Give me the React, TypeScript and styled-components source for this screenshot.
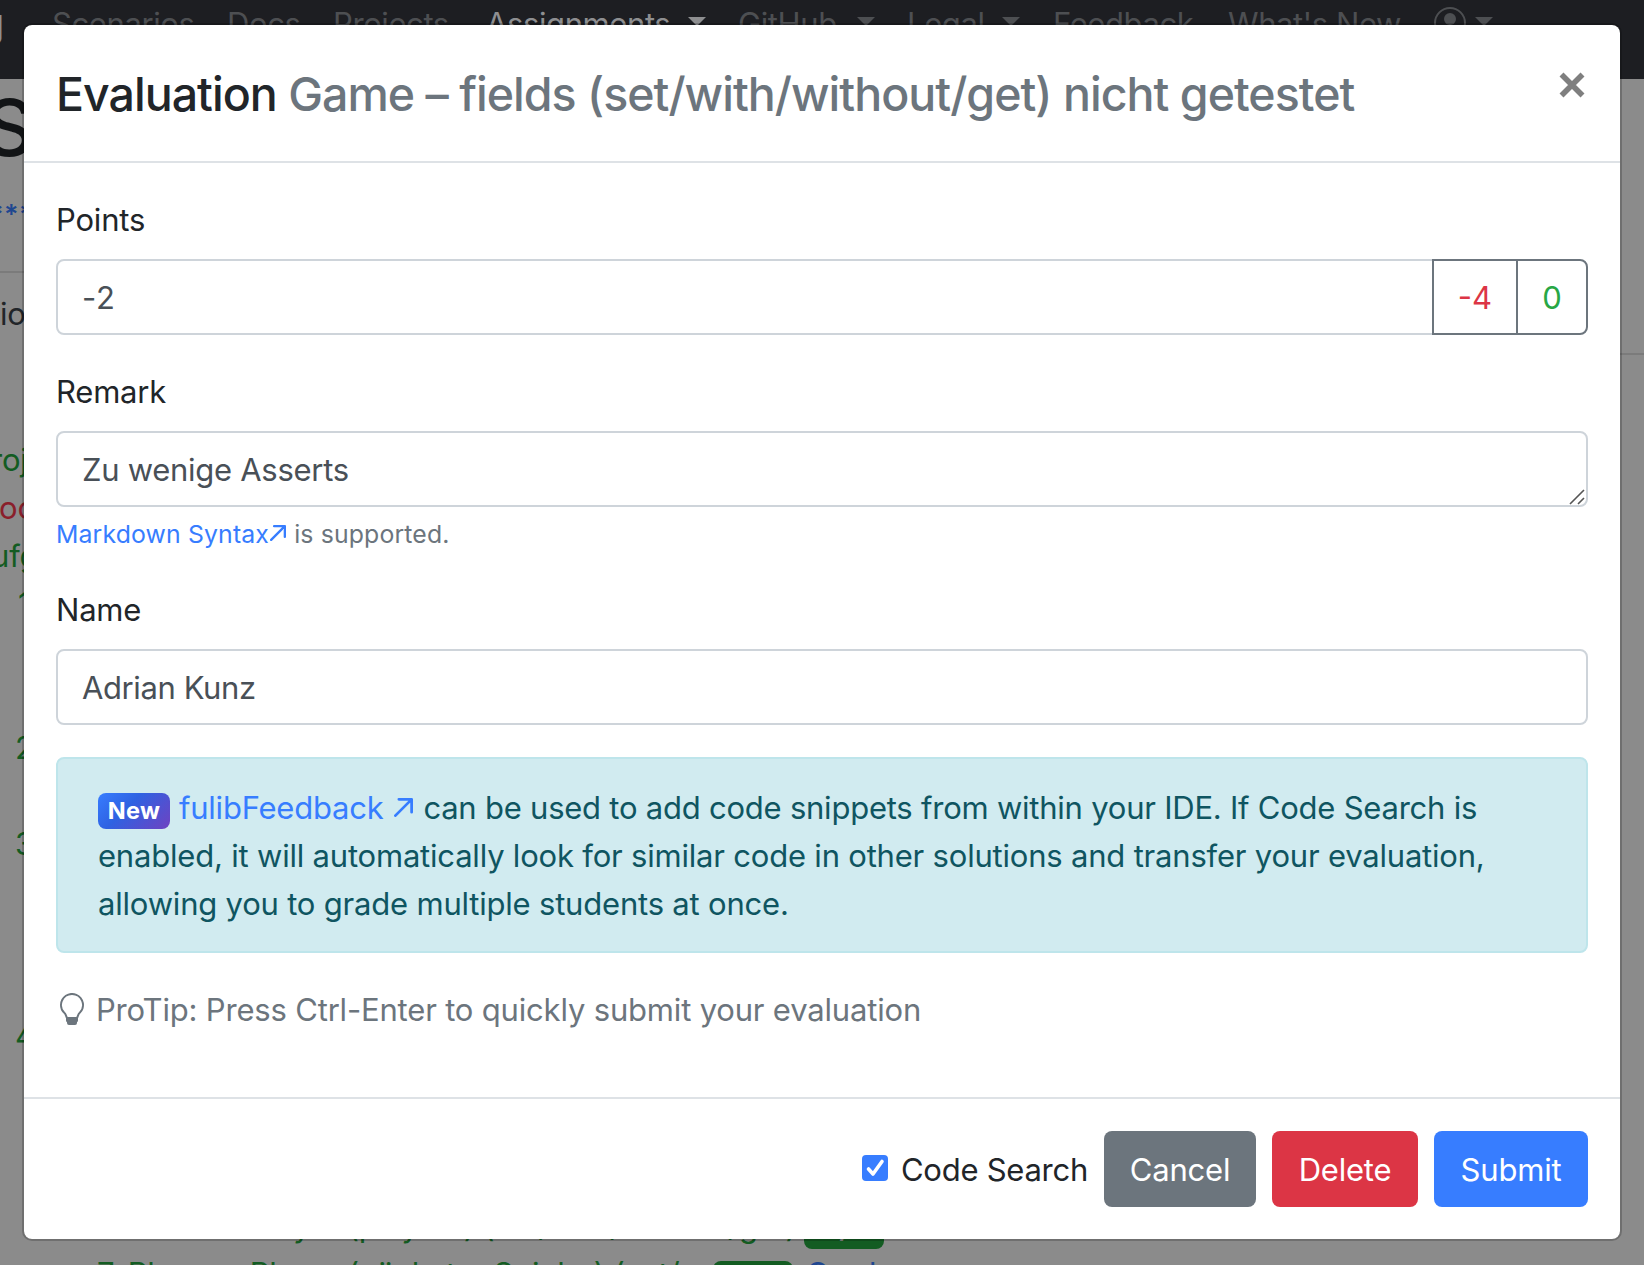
import React from 'react';
import styled, { createGlobalStyle } from 'styled-components';

const Global = createGlobalStyle`
  *, *::before, *::after { box-sizing: border-box; }
  html, body { margin: 0; padding: 0; overflow: hidden; }
  body {
    font-family: Inter, Roboto, "Liberation Sans", sans-serif;
    font-size: 31px;
    line-height: 50px;
    letter-spacing: -0.2px;
    color: #212529;
    background: #8b8b8b;
  }
`;

const dim = '#4d4f52';
const bright = '#8e8f91';
const green = '#135c22';

const Screen = styled.div`
  position: relative;
  width: 1644px;
  height: 1265px;
  overflow: hidden;
`;

/* Dimmed page behind the dialog */
const Page = styled.div`
  display: flex;
  flex-direction: column;
  white-space: nowrap;
  line-height: 48px;
`;
const Navbar = styled.nav`
  display: flex;
  flex: none;
  height: 79px;
  background: #1d1e22;
  letter-spacing: -0.4px;
`;
const Brand = styled.span`
  width: 52px;
  color: ${bright};
  font-size: 39px;
  line-height: 46px;
  text-indent: -19.5px;
`;
const NavItem = styled.span<{ $w: number; $active?: boolean }>`
  display: flex;
  width: ${p => p.$w}px;
  height: 48px;
  color: ${p => (p.$active ? bright : dim)};
`;
const Caret = styled.i`
  width: 0;
  height: 0;
  margin: 17px 1px 0 auto;
  border: 9.6px solid transparent;
  border-bottom: 0;
  border-top-color: currentColor;
`;
const Avatar = styled.svg`
  margin-top: 7px;
`;
const PageTitle = styled.h1`
  height: 96px;
  margin: 1px 0 15px -16px;
  font-size: 78px;
  font-weight: 500;
  line-height: 96px;
  color: #121416;
`;
const Solution = styled.div`
  height: 48px;
  margin-left: -11px;
  color: #1f4790;
  font-weight: 600;
  font-size: 27px;
  letter-spacing: 0.4px;
`;
const Rule = styled.hr<{ $right?: boolean }>`
  width: 24px;
  height: 2px;
  margin: ${p => (p.$right ? '15px 0 81px auto' : '32px 0 17px')};
  border: 0;
  background: #7b7b7b;
`;
const PageLine = styled.div<{ $c: string; $shift: number }>`
  height: 48px;
  margin-left: ${p => p.$shift}px;
  color: ${p => p.$c};
`;
const TaskList = styled.ol`
  margin: 0;
  padding: 0 0 0 15px;
  list-style: none;
  color: ${green};
`;
const Task = styled.li<{ $h: number; $indent?: number }>`
  height: ${p => p.$h}px;
  padding-left: ${p => p.$indent ?? 0}px;
`;
const SubTasks = styled.div`
  padding: 142px 0 0 82px;
`;
const SubTask = styled.div<{ $w: number }>`
  display: grid;
  grid-template-columns: ${p => p.$w}px 80px auto;
  column-gap: 13px;
  height: 48px;
`;
const Pill = styled.span`
  height: 36px;
  margin-top: 11px;
  border-radius: 8px;
  background: ${green};
  color: #8b8b8b;
  font-size: 24px;
  font-weight: 700;
  line-height: 33px;
  text-align: center;
`;
const PageLink = styled.span`
  color: #1f4790;
`;

/* Dialog */
const Overlay = styled.div`
  position: absolute;
  inset: 0;
  padding: 23px 22px;
`;
const Modal = styled.div`
  display: flex;
  flex-direction: column;
  border: 2px solid rgba(0, 0, 0, 0.2);
  border-radius: 10px;
  background: #fff;
  background-clip: padding-box;
`;
const Header = styled.header`
  display: flex;
  justify-content: space-between;
  align-items: flex-start;
  height: 138px;
  padding: 32px;
  border-bottom: 2px solid #dee2e6;
`;
const Title = styled.h4`
  margin: 0;
  font-size: 46.5px;
  font-weight: 500;
  line-height: 74px;
  letter-spacing: -0.98px;
  white-space: nowrap;
`;
const Muted = styled.span`
  color: #6c757d;
`;
const Close = styled.button`
  display: flex;
  align-items: center;
  justify-content: center;
  width: 32px;
  height: 56px;
  padding: 0;
  border: 0;
  background: none;
`;
const Body = styled.main`
  display: flex;
  flex-direction: column;
  padding: 32px;
`;
const Group = styled.div`
  display: flex;
  flex-direction: column;
  margin-bottom: 32px;
`;
const Label = styled.label`
  height: 48px;
  margin-bottom: 16px;
`;
const Row = styled.div`
  display: flex;
`;
const Field = styled.input<{ $joined?: boolean }>`
  flex: 1;
  min-width: 0;
  height: 76px;
  padding: 12px 24px;
  border: 2px solid #ced4da;
  border-radius: ${p => (p.$joined ? '8px 0 0 8px' : '8px')};
  outline: 0;
  font: inherit;
  letter-spacing: ${p => (p.$joined ? '0.8px' : '-0.4px')};
  color: #495057;
  background: #fff;
`;
const AreaWrap = styled.div`
  position: relative;
  display: flex;
`;
const Area = styled.textarea`
  display: block;
  width: 100%;
  height: 76px;
  padding: 12px 24px 8px;
  border: 2px solid #ced4da;
  border-radius: 8px;
  outline: 0;
  resize: none;
  overflow: hidden;
  font: inherit;
  letter-spacing: -0.28px;
  color: #495057;
`;
const Grip = styled.svg`
  position: absolute;
  right: 3px;
  bottom: 2px;
`;
const Choice = styled.button<{ $c: string; $w: number; $last?: boolean }>`
  width: ${p => p.$w}px;
  height: 76px;
  margin-left: -2px;
  padding: 2px 0 0;
  border: 2px solid #6c757d;
  border-radius: ${p => (p.$last ? '0 8px 8px 0' : '0')};
  background: #fff;
  font: inherit;
  color: ${p => p.$c};
`;
const Help = styled.small`
  height: 38px;
  margin-top: 8px;
  font-size: 24.8px;
  line-height: 39px;
  letter-spacing: 0.15px;
  color: #6c757d;
  white-space: nowrap;
`;
const Link = styled.a`
  color: #377dff;
`;
const Arrow = styled.svg<{ $size: number; $lead: number; $trail: number }>`
  width: ${p => p.$size}px;
  height: ${p => p.$size}px;
  margin: 0 ${p => p.$trail}px 0 ${p => p.$lead}px;
  vertical-align: 2px;
`;
const Alert = styled.div`
  height: 196px;
  margin-bottom: 32px;
  padding: 24px 40px;
  border: 2px solid #bee5eb;
  border-radius: 8px;
  background: #d1ebf0;
  color: #0f5561;
  white-space: nowrap;
`;
const Line = styled.div<{ $tight?: boolean }>`
  height: 48px;
  letter-spacing: ${p => (p.$tight ? '-0.23px' : '-0.2px')};
`;
const Badge = styled.span`
  display: inline-block;
  width: 72px;
  height: 36px;
  margin-right: 9px;
  border-radius: 8px;
  background: linear-gradient(135deg, #377dff 0%, #2f62e2 40%, #6f42c1 100%);
  color: #fff;
  font-size: 23.5px;
  font-weight: 700;
  line-height: 36px;
  letter-spacing: 0.3px;
  text-align: center;
`;
const Tip = styled.p`
  display: flex;
  height: 48px;
  margin: 0 0 32px;
  color: #6c757d;
  letter-spacing: -0.18px;
  white-space: nowrap;
`;
const Bulb = styled.svg`
  width: 32px;
  height: 32px;
  margin: 8px 8px 0 0;
`;
const Footer = styled.footer`
  display: flex;
  justify-content: flex-end;
  align-items: center;
  gap: 16px;
  height: 142px;
  padding: 0 32px;
  border-top: 2px solid #dee2e6;
`;
const CheckLabel = styled.label`
  display: flex;
  align-items: center;
  padding-top: 2px;
  letter-spacing: -0.26px;
  white-space: nowrap;
`;
const Check = styled.span`
  display: flex;
  width: 26px;
  height: 26px;
  margin: -5px 13px 0 0;
  border-radius: 4px;
  background: #377dff;
`;
const Button = styled.button<{ $bg: string; $w: number }>`
  width: ${p => p.$w}px;
  height: 76px;
  padding: 2px 0 0;
  border: 0;
  border-radius: 8px;
  background: ${p => p.$bg};
  color: #fff;
  font: inherit;
  letter-spacing: -0.2px;
`;

const ArrowIcon = ({ size, lead, trail = 0 }: { size: number; lead: number; trail?: number }) => (
  <Arrow $size={size} $lead={lead} $trail={trail} viewBox="0 0 18 18" fill="none" stroke="currentColor" strokeWidth="2.6" strokeLinecap="round" strokeLinejoin="round">
    <path d="M1.3 16.7L16.7 1.3M4.600 1.300H16.700V13.400" />
  </Arrow>
);

export default function App() {
  return (
    <Screen>
      <Global />
      <Page>
        <Navbar>
          <Brand>g</Brand>
          <NavItem $w={175}>Scenarios</NavItem>
          <NavItem $w={106}>Docs</NavItem>
          <NavItem $w={153}>Projects</NavItem>
          <NavItem $w={221} $active>Assignments<Caret /></NavItem>
          <NavItem $w={31} />
          <NavItem $w={138}>GitHub<Caret /></NavItem>
          <NavItem $w={31} />
          <NavItem $w={114}>Legal<Caret /></NavItem>
          <NavItem $w={32} />
          <NavItem $w={175}>Feedback</NavItem>
          <NavItem $w={206}>What's New</NavItem>
          <NavItem $w={60}>
            <Avatar width="32" height="32" viewBox="0 0 32 32">
              <circle cx="16" cy="16" r="15" fill="none" stroke={dim} strokeWidth="2" />
              <circle cx="16" cy="12" r="6" fill={dim} />
            </Avatar>
            <Caret />
          </NavItem>
        </Navbar>
        <PageTitle>S</PageTitle>
        <Solution>***</Solution>
        <Rule />
        <PageLine $c="#212529" $shift={0}>io</PageLine>
        <Rule $right />
        <PageLine $c={green} $shift={-9}>roj</PageLine>
        <PageLine $c="#8a1f2b" $shift={-1}>oc</PageLine>
        <PageLine $c={green} $shift={-9}>ufg</PageLine>
        <TaskList>
          <Task $h={144} $indent={3}>1</Task>
          <Task $h={96}>2</Task>
          <Task $h={192}>3</Task>
          <Task $h={300}>
            4
            <SubTasks>
              <SubTask $w={694}>
                <span>6. Game – Player (players) (set/with/without/get)</span>
                <Pill>2/2</Pill>
                <PageLink>Grade</PageLink>
              </SubTask>
              <SubTask $w={603}>
                <span>7. Player – Player (nächster Spieler) (set/get)</span>
                <Pill>1/1</Pill>
                <PageLink>Grade</PageLink>
              </SubTask>
            </SubTasks>
          </Task>
        </TaskList>
      </Page>

      <Overlay>
        <Modal>
          <Header>
            <Title>Evaluation <Muted>Game – fields (set/with/without/get) nicht getestet</Muted></Title>
            <Close aria-label="Close">
              <svg width="26" height="26" viewBox="0 0 26 26" stroke="#7f7f7f" strokeWidth="5.6">
                <path d="M2.5 2.5L23.5 23.5M23.5 2.5L2.5 23.5" />
              </svg>
            </Close>
          </Header>
          <Body>
            <Group>
              <Label>Points</Label>
              <Row>
                <Field $joined defaultValue="-2" />
                <Choice $c="#dc3545" $w={86}>-4</Choice>
                <Choice $c="#28a745" $w={72} $last>0</Choice>
              </Row>
            </Group>
            <Group>
              <Label>Remark</Label>
              <AreaWrap>
                <Area rows={1} defaultValue="Zu wenige Asserts" />
                <Grip width="16" height="16" viewBox="0 0 16 16" stroke="#555" strokeWidth="1.6">
                  <path d="M1 15L15 1M9 15L15 9" />
                </Grip>
              </AreaWrap>
              <Help><Link>Markdown Syntax<ArrowIcon size={16} lead={1} trail={1} /></Link> is supported.</Help>
            </Group>
            <Group>
              <Label>Name</Label>
              <Row>
                <Field defaultValue="Adrian Kunz" />
              </Row>
            </Group>
            <Alert>
              <Line $tight><Badge>New</Badge><Link>fulibFeedback <ArrowIcon size={19} lead={2} trail={2} /></Link> can be used to add code snippets from within your IDE. If Code Search is</Line>
              <Line>enabled, it will automatically look for similar code in other solutions and transfer your evaluation,</Line>
              <Line>allowing you to grade multiple students at once.</Line>
            </Alert>
            <Tip>
              <Bulb viewBox="0 0 16 16" fill="currentColor">
                <path d="M2 6a6 6 0 1 1 10.174 4.31c-.203.196-.359.4-.453.619l-.762 1.769A.5.5 0 0 1 10.5 13h-5a.5.5 0 0 1-.46-.302l-.761-1.77a1.964 1.964 0 0 0-.453-.618A5.984 5.984 0 0 1 2 6zm6-5a5 5 0 0 0-3.479 8.592c.263.254.514.564.676.941L5.83 12h4.342l.632-1.467c.162-.377.413-.687.676-.941A5 5 0 0 0 8 1z" />
                <path d="M5 12h6v1.8a.9.9 0 0 1-.5.8v.4a1 1 0 0 1-1 1h-3a1 1 0 0 1-1-1v-.4a.9.9 0 0 1-.5-.8z" />
              </Bulb>
              ProTip: Press Ctrl-Enter to quickly submit your evaluation
            </Tip>
          </Body>
          <Footer>
            <CheckLabel>
              <Check>
                <svg width="26" height="26" viewBox="0 0 26 26" fill="none" stroke="#fff" strokeWidth="3.6" strokeLinecap="round" strokeLinejoin="round">
                  <path d="M6.500 14l4.500 5L20 6.500" />
                </svg>
              </Check>
              Code Search
            </CheckLabel>
            <Button $bg="#6c757d" $w={152}>Cancel</Button>
            <Button $bg="#dc3545" $w={146}>Delete</Button>
            <Button $bg="#377dff" $w={154}>Submit</Button>
          </Footer>
        </Modal>
      </Overlay>
    </Screen>
  );
}
